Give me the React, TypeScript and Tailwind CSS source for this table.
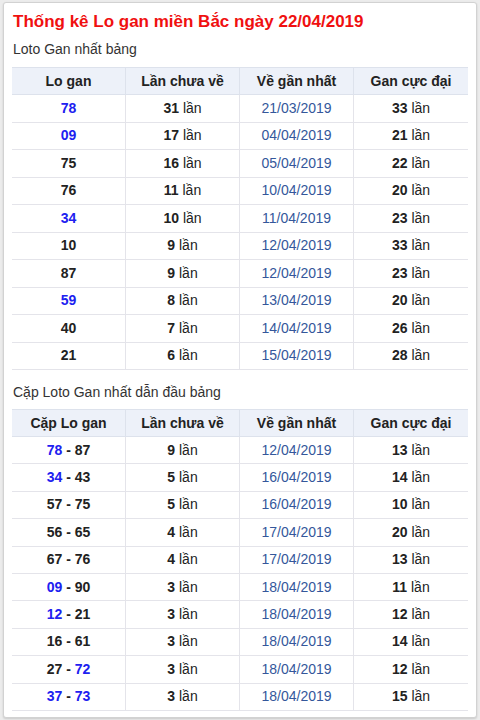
import React from "react";

type Part = { t: string; blue?: boolean };

const t1: [Part[], string, string, string][] = [
  [[{ t: "78", blue: true }], "31", "21/03/2019", "33"],
  [[{ t: "09", blue: true }], "17", "04/04/2019", "21"],
  [[{ t: "75" }], "16", "05/04/2019", "22"],
  [[{ t: "76" }], "11", "10/04/2019", "20"],
  [[{ t: "34", blue: true }], "10", "11/04/2019", "23"],
  [[{ t: "10" }], "9", "12/04/2019", "33"],
  [[{ t: "87" }], "9", "12/04/2019", "23"],
  [[{ t: "59", blue: true }], "8", "13/04/2019", "20"],
  [[{ t: "40" }], "7", "14/04/2019", "26"],
  [[{ t: "21" }], "6", "15/04/2019", "28"],
];

const pair = (a: string, ab: boolean, b: string, bb: boolean): Part[] => [
  { t: a, blue: ab },
  { t: " - " },
  { t: b, blue: bb },
];

const t2: [Part[], string, string, string][] = [
  [pair("78", true, "87", false), "9", "12/04/2019", "13"],
  [pair("34", true, "43", false), "5", "16/04/2019", "14"],
  [pair("57", false, "75", false), "5", "16/04/2019", "10"],
  [pair("56", false, "65", false), "4", "17/04/2019", "20"],
  [pair("67", false, "76", false), "4", "17/04/2019", "13"],
  [pair("09", true, "90", false), "3", "18/04/2019", "11"],
  [pair("12", true, "21", false), "3", "18/04/2019", "12"],
  [pair("16", false, "61", false), "3", "18/04/2019", "14"],
  [pair("27", false, "72", true), "3", "18/04/2019", "12"],
  [pair("37", true, "73", true), "3", "18/04/2019", "15"],
];

function Table({
  first,
  rows,
  rowH,
}: {
  first: string;
  rows: [Part[], string, string, string][];
  rowH: string;
}) {
  const heads = [first, "Lần chưa về", "Về gần nhất", "Gan cực đại"];
  return (
    <div className="w-full text-[14px] text-[#222]">
      <div className="grid grid-cols-4 h-[28px] bg-[#edf1f9] border-t border-b border-[#dde2ec] font-bold">
        {heads.map((h, i) => (
          <div
            key={i}
            className={`flex items-center justify-center ${i < 3 ? "border-r border-[#dde2ec]" : ""}`}
          >
            {h}
          </div>
        ))}
      </div>
      {rows.map((r, idx) => (
        <div
          key={idx}
          className={`grid grid-cols-4 ${rowH} border-b border-[#e4e4ea]`}
        >
          <div className="flex items-center justify-center border-r border-[#e4e4ea] font-bold whitespace-pre">
            {r[0].map((p, j) => (
              <span key={j} className={p.blue ? "text-[#2020f0]" : "text-[#222]"}>
                {p.t}
              </span>
            ))}
          </div>
          <div className="flex items-center justify-center border-r border-[#e4e4ea]">
            <span className="font-bold">{r[1]}</span>
            <span>&nbsp;lần</span>
          </div>
          <div className="flex items-center justify-center border-r border-[#e4e4ea] text-[#34579b]">
            {r[2]}
          </div>
          <div className="flex items-center justify-center">
            <span className="font-bold">{r[3]}</span>
            <span>&nbsp;lần</span>
          </div>
        </div>
      ))}
    </div>
  );
}

export default function App() {
  return (
    <div
      className="w-[480px] h-[720px] bg-[#ececec] pt-[2px] px-[3px] pb-[2px]"
      style={{ fontFamily: '"Liberation Sans", Arial, sans-serif' }}
    >
      <div className="h-full bg-white border border-[#d2d2d2] rounded-[3px] shadow-[0_1px_2px_rgba(0,0,0,0.15)] px-[8px] pt-[7px]">
        <h2 className="text-[17px] font-bold text-[#f01010] leading-[24px] pl-[1px]">
          Thống kê Lo gan miền Bắc ngày 22/04/2019
        </h2>
        <div className="mt-[5px] text-[14px] leading-[20px] text-[#333] pl-[1px]">
          Loto Gan nhất bảng
        </div>
        <div className="mt-[8px]">
          <Table first="Lo gan" rows={t1} rowH="h-[27.5px]" />
        </div>
        <div className="mt-[12px] text-[14px] leading-[20px] text-[#333] pl-[1px]">
          Cặp Loto Gan nhất dẫn đầu bảng
        </div>
        <div className="mt-[7px]">
          <Table first="Cặp Lo gan" rows={t2} rowH="h-[27.4px]" />
        </div>
      </div>
    </div>
  );
}
